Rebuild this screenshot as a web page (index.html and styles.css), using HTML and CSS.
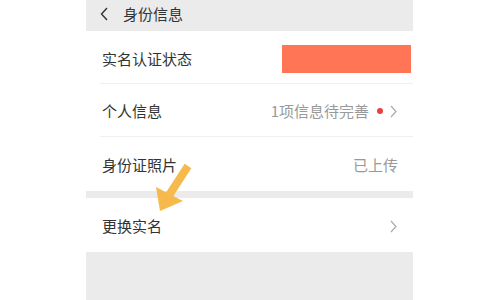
FILE: index.html
```html
<!DOCTYPE html>
<html lang="zh-CN">
<head>
<meta charset="utf-8">
<title>身份信息</title>
<link rel="stylesheet" href="styles.css">
</head>
<body>
<div class="screen">
  <div class="header">
    <svg class="back" width="8" height="14" viewBox="0 0 8 14"><path d="M7 1 L1.5 7 L7 13" fill="none" stroke="#333" stroke-width="1.4"/></svg>
    <span class="title">身份信息</span>
  </div>
  <div class="group">
    <div class="row row-first">
      <span class="label">实名认证状态</span>
      <span class="redact"></span>
    </div>
    <div class="row">
      <span class="label">个人信息</span>
      <span class="value">1项信息待完善</span>
      <span class="dot"></span>
      <svg class="chev" width="7" height="13" viewBox="0 0 7 13"><path d="M1 1 L6 6.5 L1 12" fill="none" stroke="#aaa" stroke-width="1.2"/></svg>
    </div>
    <div class="row row-last">
      <span class="label">身份证照片</span>
      <span class="value value-end">已上传</span>
    </div>
  </div>
  <div class="sep"></div>
  <div class="group">
    <div class="row row-last">
      <span class="label">更换实名</span>
      <svg class="chev" width="7" height="13" viewBox="0 0 7 13"><path d="M1 1 L6 6.5 L1 12" fill="none" stroke="#aaa" stroke-width="1.2"/></svg>
    </div>
  </div>
  <div class="bottom"></div>
</div>
<svg class="arrow" width="45" height="55" viewBox="0 0 45 55">
  <line x1="19.5" y1="34.5" x2="38" y2="6" stroke="#f5b94c" stroke-width="8"/>
  <polygon points="10,51 6,27 33,41" fill="#f5b94c"/>
</svg>
</body>
</html>
```
FILE: styles.css
```css
html, body {
  margin: 0;
  padding: 0;
  background: #ffffff;
}
body {
  width: 480px;
  height: 300px;
  overflow: hidden;
  position: relative;
  font-family: "Noto Sans CJK SC", "Noto Sans", sans-serif;
}
.screen {
  margin-left: 86px;
  width: 327px;
  height: 300px;
  display: flex;
  flex-direction: column;
  background: #fff;
}
.header {
  height: 31px;
  background: #ebebeb;
  display: flex;
  align-items: center;
  padding-left: 14px;
  box-sizing: border-box;
  padding-bottom: 4px;
}
.back {
  display: block;
  margin-right: 15px;
}
.title {
  font-size: 15px;
  color: #333;
  line-height: 20px;
}
.group {
  padding-left: 14px;
}
.row {
  height: 53px;
  display: flex;
  align-items: center;
  border-bottom: 1px solid #f0f0f0;
  padding-right: 16px;
  box-sizing: border-box;
  padding-top: 2px;
}
.row-first {
  height: 53px;
  padding-right: 2px;
  padding-top: 4px;
}
.row-last {
  border-bottom: none;
  height: 54px;
}
.label {
  flex: 1;
  font-size: 15px;
  color: #333;
  padding-left: 2px;
  line-height: 20px;
}
.value {
  font-size: 15px;
  color: #999;
  line-height: 20px;
}
.value-end {
  margin-right: -1px;
}
.redact {
  width: 129px;
  height: 28px;
  background: #ff7556;
}
.dot {
  width: 6px;
  height: 6px;
  border-radius: 50%;
  background: #e8403f;
  margin-left: 8px;
  margin-right: 7px;
}
.chev {
  display: block;
}
.sep {
  height: 7px;
  background: #ebebeb;
}
.bottom {
  flex: 1;
  background: #ebebeb;
}
.arrow {
  position: absolute;
  left: 150px;
  top: 160px;
}
```
